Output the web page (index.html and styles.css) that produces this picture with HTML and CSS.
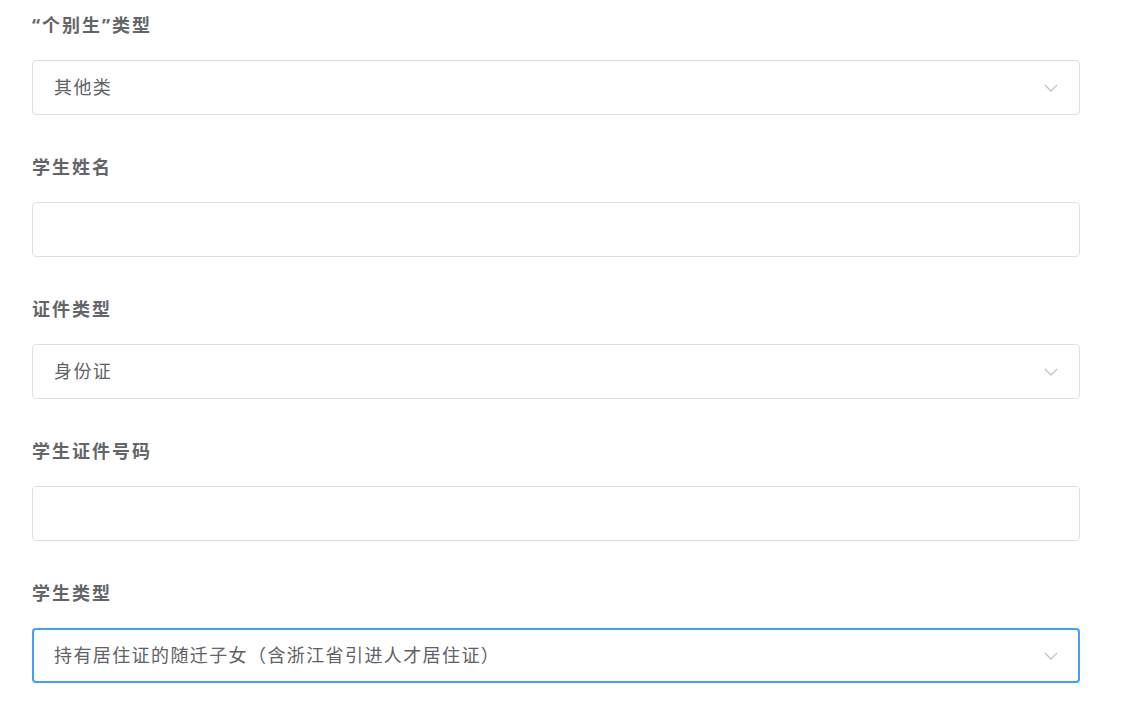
FILE: index.html
```html
<!DOCTYPE html>
<html lang="zh-CN">
<head>
<meta charset="utf-8">
<link rel="stylesheet" href="styles.css">
</head>
<body>
<form class="form">
  <div class="item">
    <div class="label">“个别生”类型</div>
    <div class="control select">
      <span class="value">其他类</span>
      <svg class="arrow" viewBox="0 0 14 8" width="14" height="8"><path d="M1 1 L7 7 L13 1" fill="none" stroke="#c0c4cc" stroke-width="1.3"/></svg>
    </div>
  </div>
  <div class="item">
    <div class="label">学生姓名</div>
    <div class="control"></div>
  </div>
  <div class="item">
    <div class="label">证件类型</div>
    <div class="control select">
      <span class="value">身份证</span>
      <svg class="arrow" viewBox="0 0 14 8" width="14" height="8"><path d="M1 1 L7 7 L13 1" fill="none" stroke="#c0c4cc" stroke-width="1.3"/></svg>
    </div>
  </div>
  <div class="item">
    <div class="label">学生证件号码</div>
    <div class="control"></div>
  </div>
  <div class="item">
    <div class="label">学生类型</div>
    <div class="control select focus">
      <span class="value">持有居住证的随迁子女（含浙江省引进人才居住证）</span>
      <svg class="arrow" viewBox="0 0 14 8" width="14" height="8"><path d="M1 1 L7 7 L13 1" fill="none" stroke="#c0c4cc" stroke-width="1.3"/></svg>
    </div>
  </div>
</form>
</body>
</html>
```

FILE: styles.css
```css
html, body {
  margin: 0;
  padding: 0;
  background: #ffffff;
}
body {
  font-family: "Noto Sans", "Noto Sans CJK SC", sans-serif;
  color: #606266;
}
.form {
  padding: 13px 0 0 32px;
  width: 1048px;
}
.item {
  margin-bottom: 40px;
}
.label {
  font-size: 18px;
  line-height: 24px;
  height: 24px;
  font-weight: 700;
  letter-spacing: 2px;
  color: #636569;
  margin-bottom: 23px;
}
.control {
  box-sizing: border-box;
  height: 55px;
  border: 1px solid #dcdfe6;
  border-radius: 4px;
  display: flex;
  align-items: center;
  padding: 0 21px;
}
.control.focus {
  border: 2px solid #409eff;
  padding: 0 20px;
}
.value {
  flex: 1;
  font-size: 18px;
  line-height: 24px;
  letter-spacing: 1.4px;
  color: #606266;
  margin-top: -2px;
}
.arrow {
  flex: none;
}
```
